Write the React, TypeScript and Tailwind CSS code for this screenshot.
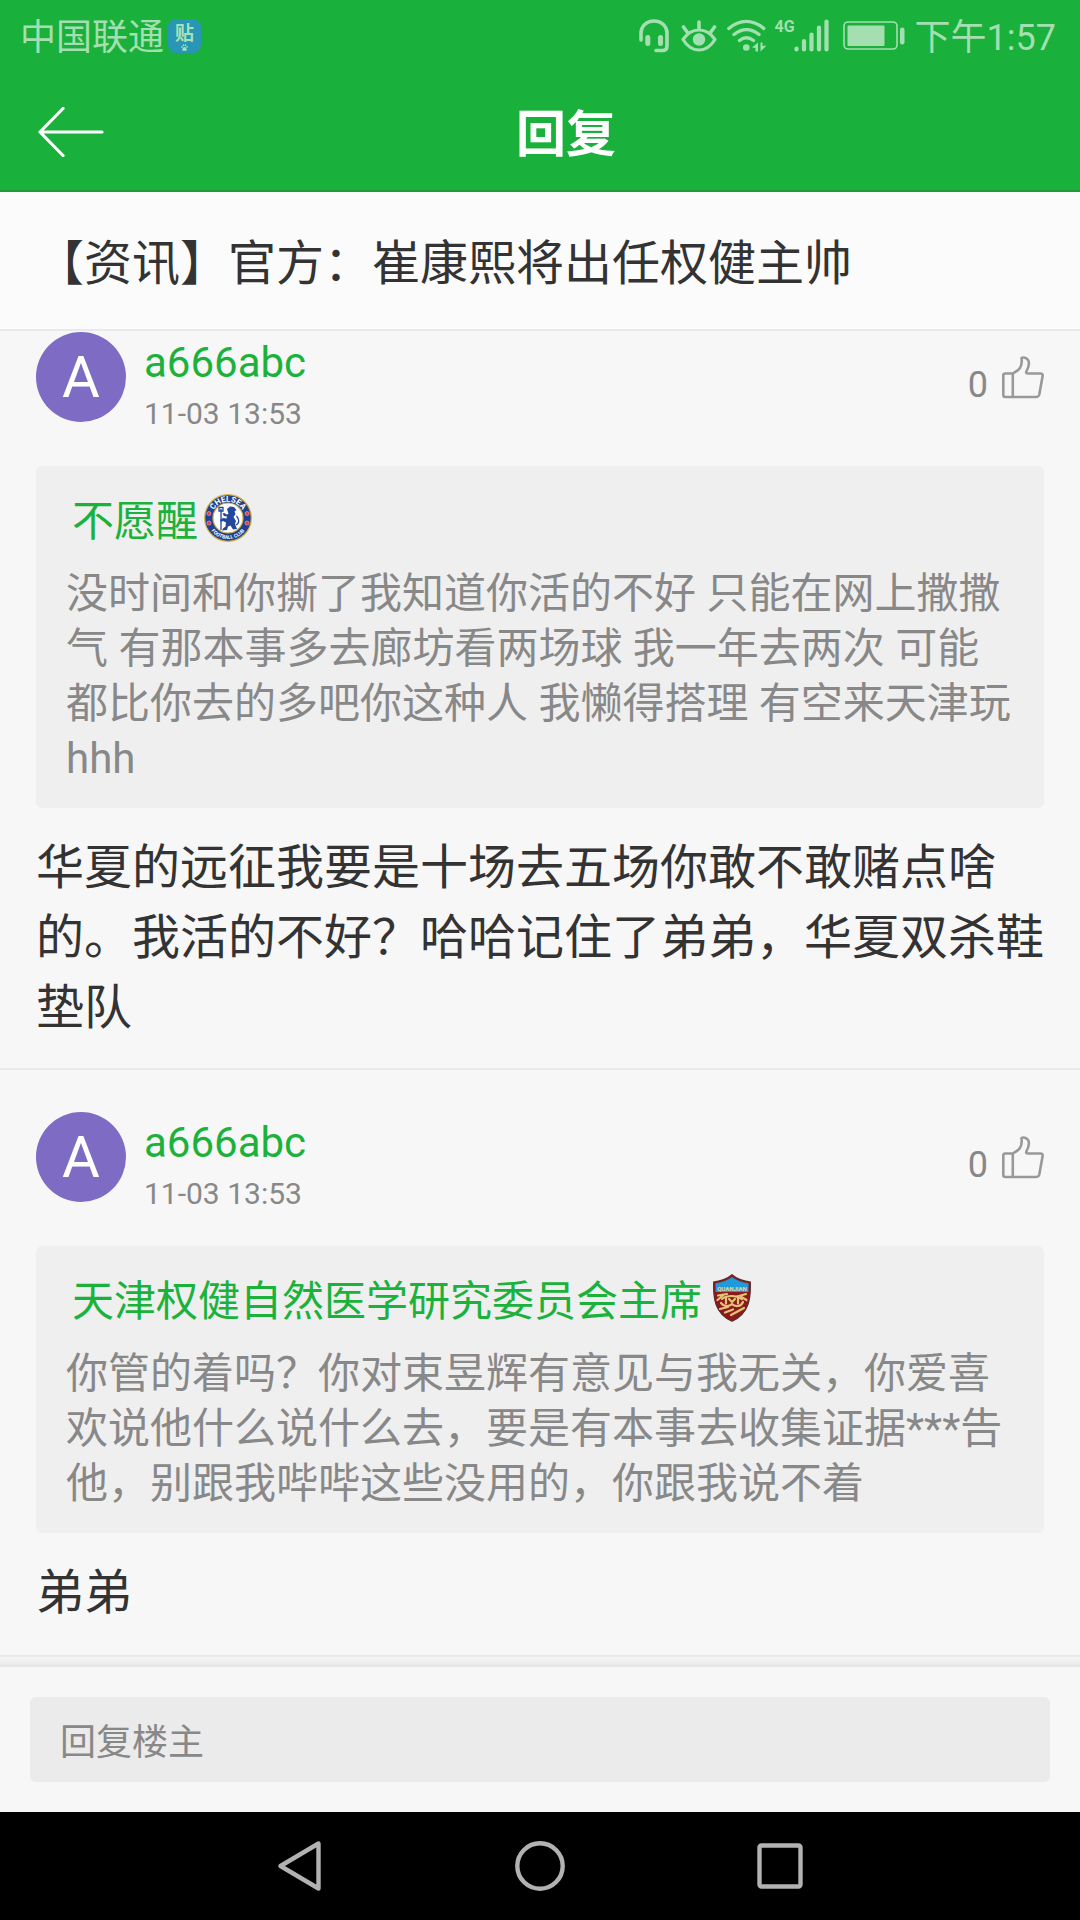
import React from "react";

type Comment = {
  id: number;
  author: string;
  initial: string;
  time: string;
  likes: number;
  quote: { author: string; badge: React.ReactNode; text: string };
  body: string;
};

function HeadsetIcon() {
  return (
    <svg width="30" height="34" viewBox="0 0 30 34" fill="none" stroke="currentColor" strokeLinecap="round" aria-hidden="true">
      <path d="M2 21V14.500C2 7 7.500 2 15 2s13 5 13 12.500V27c0 3-1.500 4.500-4.500 4.500H17" strokeWidth="3.600" />
      <path d="M8.800 18.500v6M21.500 18.500v6" strokeWidth="5" />
    </svg>
  );
}

function EyeIcon() {
  return (
    <svg width="36" height="34" viewBox="0 0 36 34" fill="none" stroke="currentColor" strokeLinecap="round" aria-hidden="true">
      <path d="M2 20.500C6 14.500 11.500 11 18 11s12 3.500 16 9.500C30 27 24.500 31 18 31S6 27 2 20.500Z" strokeWidth="3.200" strokeLinejoin="round" />
      <circle cx="18" cy="20.500" r="6.200" fill="currentColor" stroke="none" />
      <path d="M18 3v7M2.500 8l4 5.500M33.500 8l-4 5.500" strokeWidth="3.600" />
    </svg>
  );
}

function WifiIcon() {
  return (
    <svg width="40" height="34" viewBox="0 0 40 34" fill="none" stroke="currentColor" strokeLinecap="round" aria-hidden="true">
      <path d="M1.800 9.500c11-9.500 24-9.500 35 0M7 15.500c8-6.500 17-6.500 25 0M12.500 21.500c4.500-3.500 9.500-3.500 14 0" strokeWidth="3.400" />
      <circle cx="19.300" cy="28.500" r="3.300" fill="currentColor" stroke="none" />
      <path d="M31 23.500v9h-2.500v-3.500l-3.500-.5ZM33.500 32.500v-9h2v3.500l4-.5Z" fill="currentColor" stroke="none" />
    </svg>
  );
}

function SignalIcon() {
  return (
    <span className="relative block h-[34px] w-[54px]">
      <span className="absolute left-0 top-0 text-[16px] leading-[16px] font-bold">4G</span>
      <svg className="absolute right-0 top-0" width="35" height="34" viewBox="0 0 35 34" fill="none" stroke="currentColor" strokeWidth="4.200" strokeLinecap="round" aria-hidden="true">
        <path d="M2.500 29.500v1M10 22v8.500M17.500 15.500v15M25 8.500v22M32.500 2.500v28" />
      </svg>
    </span>
  );
}

function BatteryIcon() {
  return (
    <svg width="62" height="34" viewBox="0 0 62 34" fill="none" stroke="currentColor" aria-hidden="true">
      <rect x="1" y="3" width="53" height="27" rx="4" strokeWidth="1.600" />
      <rect x="4.500" y="6.500" width="37" height="20.500" rx="1" fill="currentColor" stroke="none" />
      <rect x="57" y="8.500" width="4.500" height="17" rx="2.200" fill="currentColor" stroke="none" />
    </svg>
  );
}

function PawIcon() {
  return (
    <svg width="7" height="7" viewBox="0 0 14 14" fill="currentColor" aria-hidden="true">
      <ellipse cx="2" cy="6" rx="1.500" ry="2" />
      <ellipse cx="5" cy="2.500" rx="1.500" ry="2" />
      <ellipse cx="9" cy="2.500" rx="1.500" ry="2" />
      <ellipse cx="12" cy="6" rx="1.500" ry="2" />
      <path d="M7 6c2 0 5 4 4.500 6S9 13.500 7 13.500 3 14 2.500 12 5 6 7 6Z" />
    </svg>
  );
}

function ThumbIcon() {
  return (
    <svg width="42" height="48" viewBox="0 0 42 48" fill="none" stroke="#999999" strokeWidth="2.600" strokeLinejoin="round" strokeLinecap="round" aria-hidden="true">
      <path d="M10.800 17.500H3.300a2 2 0 0 0-2 2v19.500a2 2 0 0 0 2 2H34c2 0 2.800-.8 3.300-2.500l3.300-18.500c.3-1.800-.6-2.500-2.100-2.500H25.500c-1.500 0-1.600-1-1.100-2 2-4 3.400-9 1.600-11.500-1.600-2.200-4.600-2.800-6.500-2.100.6 4.200.4 7.200-1.700 10.300-1.800 2.600-4.500 3.800-7 5.300v23.500" />
    </svg>
  );
}

function ChelseaBadge() {
  return (
    <svg className="mt-1" width="48" height="48" viewBox="0 0 48 48" role="img" aria-label="Chelsea">
      <defs>
        <path id="chelsea-top" d="M7.700 24a16.300 16.300 0 0 1 32.600 0" />
        <path id="chelsea-bottom" d="M3 24a21 21 0 0 0 42 0" />
      </defs>
      <circle cx="24" cy="24" r="23.300" fill="#22408f" stroke="#d5b043" strokeWidth="1.200" />
      <circle cx="24" cy="24" r="15" fill="#ffffff" stroke="#d5b043" strokeWidth="1.200" />
      <text fill="#ffffff" fontSize="8" fontWeight="700" textAnchor="middle">
        <textPath href="#chelsea-top" startOffset="50%">CHELSEA</textPath>
      </text>
      <text fill="#ffffff" fontSize="5" fontWeight="700" textAnchor="middle">
        <textPath href="#chelsea-bottom" startOffset="50%">FOOTBALL CLUB</textPath>
      </text>
      <g fill="#d9404f" stroke="#f3b9b9" strokeWidth=".6">
        <circle cx="4.900" cy="19.500" r="2" />
        <circle cx="5" cy="29" r="2" />
        <circle cx="43.100" cy="19.500" r="2" />
        <circle cx="43" cy="29" r="2" />
      </g>
      <path d="M23 15l3-2.500 4 .5 2.500 3-2 1.500 1 2.500-2 3 2.500 4-1 3 2 5-4 .5-2.500-4-2.500 1-1 3.500-5 .5 1-2 2.500-2 .5-4-3-1.500-2 1-1-2 3-2 3.500.5.500-2-3-.5-1.500-2.500 2-.5 2 1.500 2-.5Z" fill="#23479b" />
      <path d="M17 15v21M15 13.500h4v3.500h-4ZM32 31c4-2 3-6 .5-9" fill="none" stroke="#23479b" strokeWidth="1.300" />
    </svg>
  );
}

function QuanjianBadge() {
  return (
    <svg className="mt-1" width="48" height="48" viewBox="0 0 48 48" role="img" aria-label="Quanjian">
      <path d="M24 .8c4.500 4 11 6.200 18.300 7.200.6 16-1 31.500-18.300 39.200C6.700 39.500 5.100 24 5.700 8 13 7 19.500 4.800 24 .8Z" fill="#8c1a1c" stroke="#5d2a2c" strokeWidth="1.200" />
      <path d="M24 3c4 3.400 10 5.400 16.500 6.300V18h-33V9.300C14 8.400 20 6.400 24 3Z" fill="#1f9bdc" />
      <text x="24" y="16.500" fill="#e5dc92" fontSize="6" fontWeight="700" textAnchor="middle">QUANJIAN</text>
      <g fill="none" stroke="#e3c377" strokeWidth="2.200" strokeLinecap="round">
        <path d="M10 21.500l9-1.500M9.500 26l6-5M38 20l-9 2.500M38.500 26l-5-3" />
        <path d="M14 25c5-4 14-4 20 0M13 29c3 4 8 4 11 1 3 3 9 3 11-2M18 24.500v5M30 24.500v5M21 25l3 3 3-3M12 35l8-2M36 34l-13 7M17 38.500l8-3" />
      </g>
    </svg>
  );
}

const comments: Comment[] = [
  {
    id: 1,
    author: "a666abc",
    initial: "A",
    time: "11-03 13:53",
    likes: 0,
    quote: {
      author: "不愿醒",
      badge: <ChelseaBadge />,
      text: "没时间和你撕了我知道你活的不好 只能在网上撒撒气 有那本事多去廊坊看两场球 我一年去两次 可能都比你去的多吧你这种人 我懒得搭理 有空来天津玩hhh",
    },
    body: "华夏的远征我要是十场去五场你敢不敢赌点啥的。我活的不好？哈哈记住了弟弟，华夏双杀鞋垫队",
  },
  {
    id: 2,
    author: "a666abc",
    initial: "A",
    time: "11-03 13:53",
    likes: 0,
    quote: {
      author: "天津权健自然医学研究委员会主席",
      badge: <QuanjianBadge />,
      text: "你管的着吗？你对束昱辉有意见与我无关，你爱喜欢说他什么说什么去，要是有本事去收集证据***告他，别跟我哔哔这些没用的，你跟我说不着",
    },
    body: "弟弟",
  },
];

function StatusBar() {
  return (
    <div className="flex h-[72px] items-center pl-5 pr-6 text-[36px] text-[#a3dfb0]">
      <span className="pt-1 leading-[36px]">中国联通</span>
      <span className="ml-1 flex h-[34px] w-[33px] flex-col items-center rounded-lg bg-[#2896b4] pt-1 text-[#a5e3b6]">
        <span className="text-[19px] leading-[21px] font-bold">贴</span>
        <PawIcon />
      </span>
      <span className="ml-auto flex items-center">
        <HeadsetIcon />
        <span className="ml-3"><EyeIcon /></span>
        <span className="ml-2.5"><WifiIcon /></span>
        <span className="ml-2"><SignalIcon /></span>
        <span className="ml-3.5"><BatteryIcon /></span>
        <span className="ml-2.5 pt-1 leading-[36px]">下午1:57</span>
      </span>
    </div>
  );
}

function CommentItem({ comment }: { comment: Comment }) {
  return (
    <article className="border-b-2 border-[#e9e9e9] px-9 pb-[25px] last:pb-[27px]">
      <div className="flex items-start">
        <div className="flex size-[90px] shrink-0 items-center justify-center rounded-full bg-[#7e6bc3] text-[58px] leading-[60px] text-white">
          {comment.initial}
        </div>
        <div className="ml-[18px] flex-1">
          <a href="#user" className="block text-[42px] leading-[62px] text-[#1ab23b]">{comment.author}</a>
          <time className="mt-0.5 block text-[30px] leading-[36px] text-[#888888]">{comment.time}</time>
        </div>
        <button type="button" aria-label="点赞" className="mt-6 flex items-end gap-3.5 text-[36px] leading-[38px] text-[#888888]">
          {comment.likes}
          <ThumbIcon />
        </button>
      </div>
      <blockquote className="mt-[34px] rounded-md bg-[#efefef] px-[30px] pt-6 pb-[22px] text-[42px]">
        <a href="#quoted" className="ml-1.5 flex items-start gap-1.5 leading-[64px] text-[#1ab23b]">
          {comment.quote.author}
          {comment.quote.badge}
        </a>
        <p className="mt-3 leading-[55px] text-[#888888]">{comment.quote.text}</p>
      </blockquote>
      <p className="mt-[25px] text-[48px] leading-[70px] text-[#333333]">{comment.body}</p>
    </article>
  );
}

export default function App() {
  return (
    <div className="flex min-h-screen flex-col bg-[#f7f7f7] font-['Roboto','Noto_Sans_CJK_SC',sans-serif]">
      <header className="border-b-2 border-[#209a3a] bg-[#19b13b]">
        <StatusBar />
        <div className="flex h-[118px] items-center">
          <button type="button" aria-label="返回" className="flex w-[126px] pl-[37px] text-white">
            <svg width="68" height="52" viewBox="0 0 68 52" fill="none" stroke="currentColor" strokeWidth="3.200" strokeLinecap="round" strokeLinejoin="round" aria-hidden="true">
              <path d="M26 3.500 3 27l23 23.500M3 27h62" />
            </svg>
          </button>
          <h1 className="flex-1 pt-2 pr-[74px] text-center text-[50px] leading-[60px] font-bold text-white">回复</h1>
        </div>
      </header>
      <h2 className="border-b-2 border-[#e9e9e9] bg-[#fbfbfb] px-9 pt-[42px] pb-[35px] text-[48px] leading-[60px] text-[#333333]">
        【资讯】官方：崔康熙将出任权健主帅
      </h2>
      <main className="flex flex-1 flex-col gap-[42px] pt-px">
        {comments.map((comment) => (
          <CommentItem key={comment.id} comment={comment} />
        ))}
      </main>
      <div className="h-2.5 bg-linear-to-b from-[#f7f7f7] to-[#e6e6e6]" />
      <form className="px-[30px] py-[30px]">
        <input
          type="text"
          aria-label="回复楼主"
          placeholder="回复楼主"
          className="block h-[85px] w-full rounded-md bg-[#ebebeb] px-[30px] pt-1.5 text-[36px] text-[#333333] outline-none placeholder:text-[#888888]"
        />
      </form>
      <nav className="flex h-[108px] items-center justify-center bg-black text-[#b2b2b2]">
        <button type="button" aria-label="后退" className="flex w-60 justify-center">
          <svg width="50" height="54" viewBox="0 0 50 54" fill="none" stroke="currentColor" strokeWidth="4.400" strokeLinejoin="round" aria-hidden="true">
            <path d="M43.500 4.500v45L5.500 27Z" />
          </svg>
        </button>
        <button type="button" aria-label="主页" className="flex w-60 justify-center">
          <svg width="50" height="50" viewBox="0 0 50 50" fill="none" stroke="currentColor" strokeWidth="4.400" aria-hidden="true">
            <circle cx="25" cy="25" r="22.700" />
          </svg>
        </button>
        <button type="button" aria-label="最近任务" className="flex w-60 justify-center">
          <svg width="46" height="46" viewBox="0 0 46 46" fill="none" stroke="currentColor" strokeWidth="4.400" aria-hidden="true">
            <rect x="2.500" y="2.500" width="41" height="41" rx="2" />
          </svg>
        </button>
      </nav>
    </div>
  );
}
